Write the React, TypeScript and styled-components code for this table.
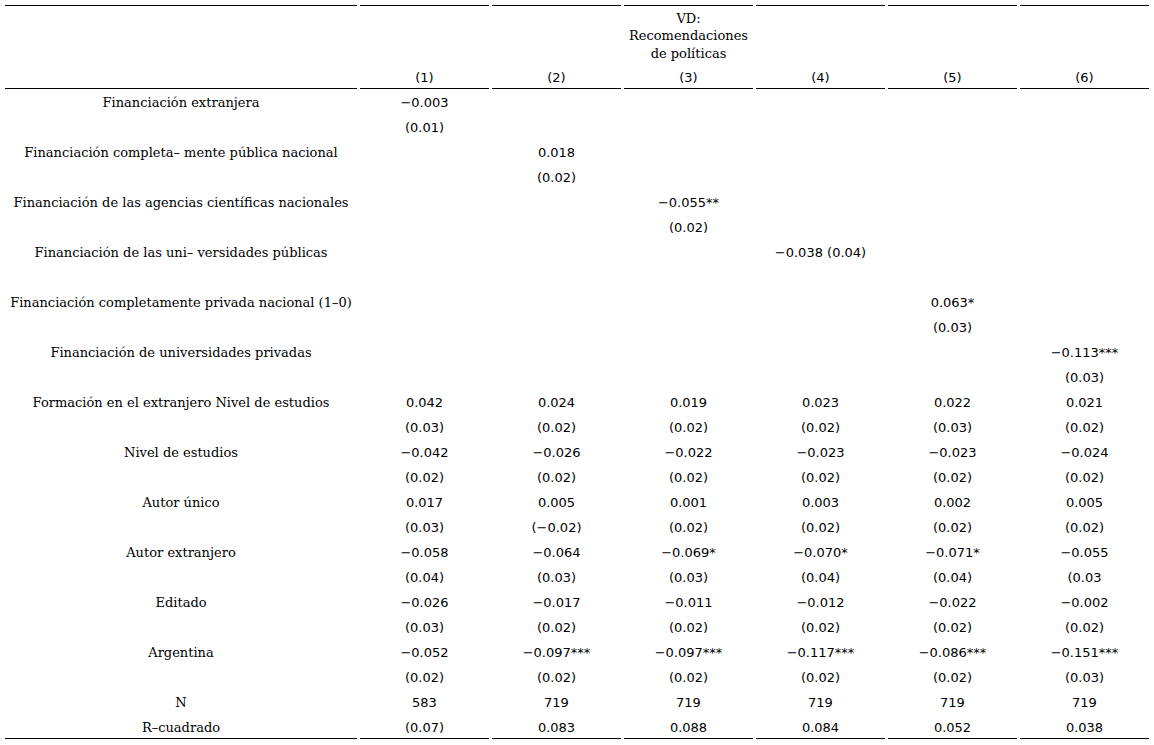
import React from "react";
import styled, { createGlobalStyle } from "styled-components";

const Global = createGlobalStyle`
  html, body { margin: 0; padding: 0; background: #fff; }
  * { box-sizing: border-box; }
`;

const Table = styled.table`
  margin: 5px 2px 0 2px;
  width: 1150px;
  table-layout: fixed;
  border-collapse: separate;
  border-spacing: 3px 0;
  color: #000;
`;

const LabelCol = styled.col`
  width: 352px;
`;

const HeadCell = styled.th<{ $top?: boolean; $bottom?: boolean; $h: number }>`
  padding: 2px 0 0 0;
  height: ${(p) => p.$h}px;
  font-weight: normal;
  text-align: center;
  vertical-align: middle;
  border-top: ${(p) => (p.$top ? "1px solid #000" : "0")};
  border-bottom: ${(p) => (p.$bottom ? "1px solid #000" : "0")};
`;

const HeadTitle = styled.div`
  font-family: "DejaVu Serif", serif;
  font-size: 13px;
  line-height: 17.5px;
`;

const ModelNum = styled.span`
  font-family: "DejaVu Sans", sans-serif;
  font-size: 13px;
`;

const Label = styled.td<{ $bottom?: boolean }>`
  padding: 2px 0 0 0;
  height: 25px;
  text-align: center;
  vertical-align: middle;
  white-space: nowrap;
  font-family: "DejaVu Serif", serif;
  font-size: 13px;
  border-bottom: ${(p) => (p.$bottom ? "1px solid #000" : "0")};
`;

const Value = styled.td<{ $bottom?: boolean }>`
  padding: 2px 0 0 0;
  height: 25px;
  text-align: center;
  vertical-align: middle;
  white-space: nowrap;
  font-family: "DejaVu Sans", sans-serif;
  font-size: 13px;
  border-bottom: ${(p) => (p.$bottom ? "1px solid #000" : "0")};
`;

type Row = [string, string[]];

const E = "";
const rows: Row[] = [
  ["Financiación extranjera", ["−0.003", E, E, E, E, E]],
  [E, ["(0.01)", E, E, E, E, E]],
  ["Financiación completa– mente pública nacional", [E, "0.018", E, E, E, E]],
  [E, [E, "(0.02)", E, E, E, E]],
  ["Financiación de las agencias científicas nacionales", [E, E, "−0.055**", E, E, E]],
  [E, [E, E, "(0.02)", E, E, E]],
  ["Financiación de las uni– versidades públicas", [E, E, E, "−0.038 (0.04)", E, E]],
  [E, [E, E, E, E, E, E]],
  ["Financiación completamente privada nacional (1–0)", [E, E, E, E, "0.063*", E]],
  [E, [E, E, E, E, "(0.03)", E]],
  ["Financiación de universidades privadas", [E, E, E, E, E, "−0.113***"]],
  [E, [E, E, E, E, E, "(0.03)"]],
  ["Formación en el extranjero Nivel de estudios", ["0.042", "0.024", "0.019", "0.023", "0.022", "0.021"]],
  [E, ["(0.03)", "(0.02)", "(0.02)", "(0.02)", "(0.03)", "(0.02)"]],
  ["Nivel de estudios", ["−0.042", "−0.026", "−0.022", "−0.023", "−0.023", "−0.024"]],
  [E, ["(0.02)", "(0.02)", "(0.02)", "(0.02)", "(0.02)", "(0.02)"]],
  ["Autor único", ["0.017", "0.005", "0.001", "0.003", "0.002", "0.005"]],
  [E, ["(0.03)", "(−0.02)", "(0.02)", "(0.02)", "(0.02)", "(0.02)"]],
  ["Autor extranjero", ["−0.058", "−0.064", "−0.069*", "−0.070*", "−0.071*", "−0.055"]],
  [E, ["(0.04)", "(0.03)", "(0.03)", "(0.04)", "(0.04)", "(0.03"]],
  ["Editado", ["−0.026", "−0.017", "−0.011", "−0.012", "−0.022", "−0.002"]],
  [E, ["(0.03)", "(0.02)", "(0.02)", "(0.02)", "(0.02)", "(0.02)"]],
  ["Argentina", ["−0.052", "−0.097***", "−0.097***", "−0.117***", "−0.086***", "−0.151***"]],
  [E, ["(0.02)", "(0.02)", "(0.02)", "(0.02)", "(0.02)", "(0.03)"]],
  ["N", ["583", "719", "719", "719", "719", "719"]],
  ["R–cuadrado", ["(0.07)", "0.083", "0.088", "0.084", "0.052", "0.038"]],
];

export default function App() {
  const models = ["(1)", "(2)", "(3)", "(4)", "(5)", "(6)"];
  return (
    <>
      <Global />
      <Table>
        <colgroup>
          <LabelCol />
          {models.map((m) => (
            <col key={m} />
          ))}
        </colgroup>
        <thead>
          <tr>
            <HeadCell $top $h={59} />
            <HeadCell $top $h={59} />
            <HeadCell $top $h={59} />
            <HeadCell $top $h={59}>
              <HeadTitle>
                VD:
                <br />
                Recomendaciones
                <br />
                de políticas
              </HeadTitle>
            </HeadCell>
            <HeadCell $top $h={59} />
            <HeadCell $top $h={59} />
            <HeadCell $top $h={59} />
          </tr>
          <tr>
            <HeadCell $bottom $h={25} />
            {models.map((m) => (
              <HeadCell key={m} $bottom $h={25}>
                <ModelNum>{m}</ModelNum>
              </HeadCell>
            ))}
          </tr>
        </thead>
        <tbody>
          {rows.map(([label, vals], i) => {
            const last = i === rows.length - 1;
            return (
              <tr key={i}>
                <Label $bottom={last}>{label}</Label>
                {vals.map((v, j) => (
                  <Value key={j} $bottom={last}>
                    {v}
                  </Value>
                ))}
              </tr>
            );
          })}
        </tbody>
      </Table>
    </>
  );
}
